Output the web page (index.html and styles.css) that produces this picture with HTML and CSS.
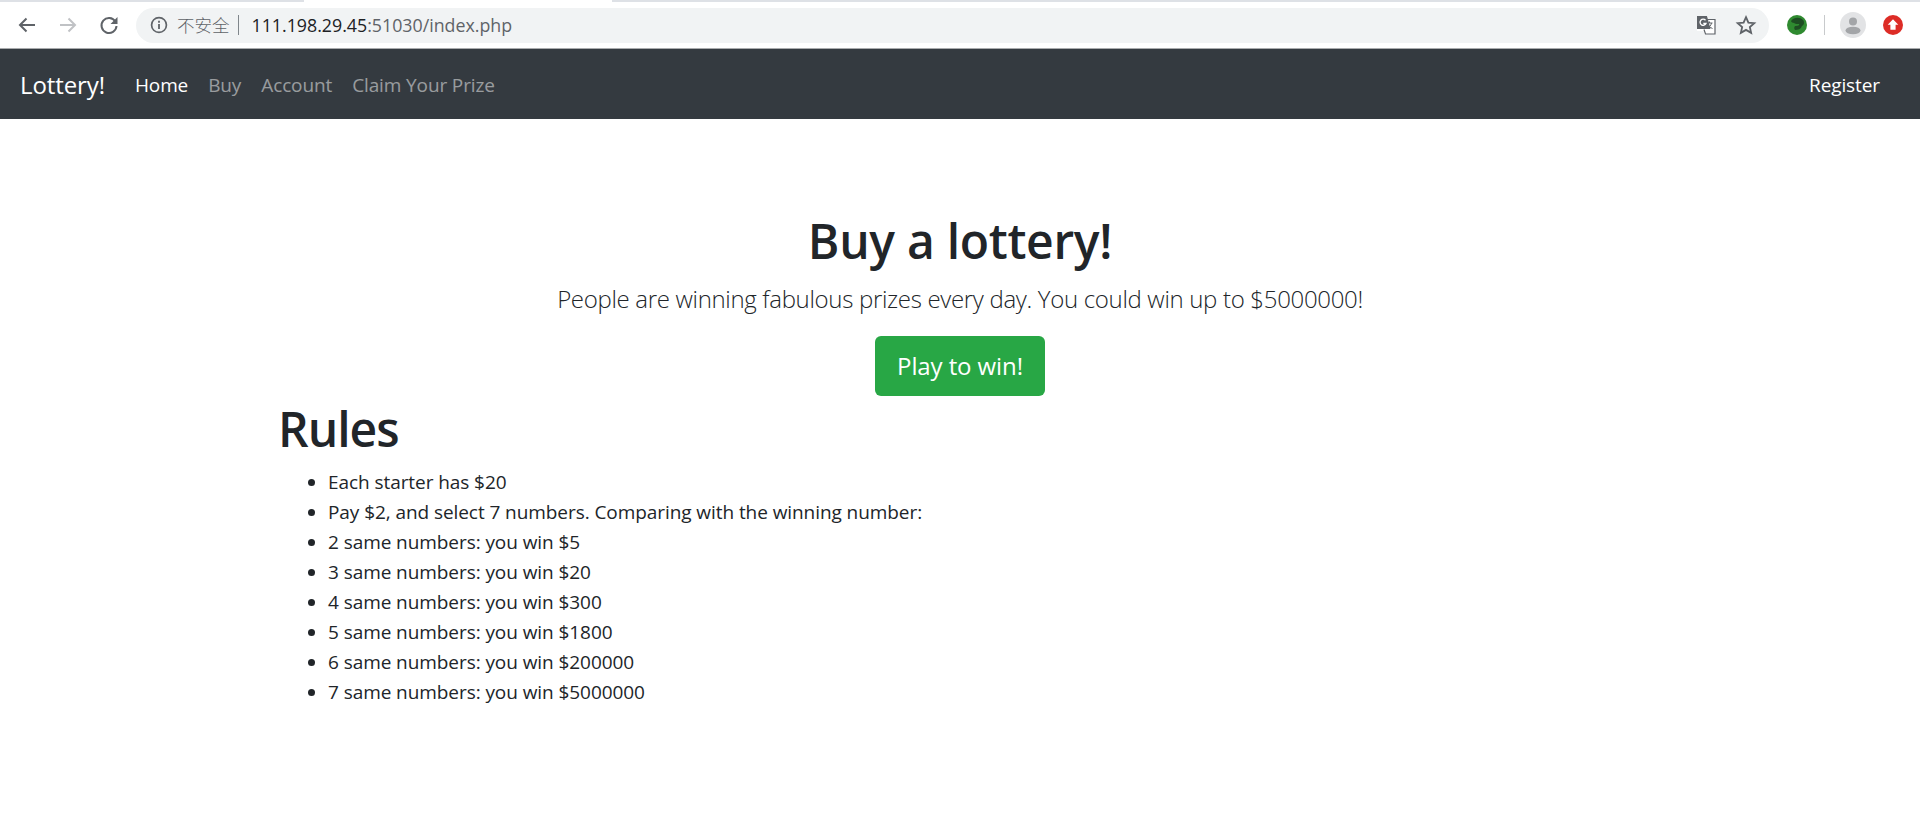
FILE: index.html
```html
<!DOCTYPE html>
<html lang="en">
<head>
    <meta charset="UTF-8">
    <title>Lottery!</title>
    <link rel="stylesheet" href="styles.css">
</head>
<body>
    <div class="tab-strip"><div class="tab-active"></div></div>
    <div class="toolbar">
        <svg class="tool-icon" viewBox="0 0 24 24"><path d="M20 12H5M11.500 5.500L5 12l6.500 6.500" fill="none" stroke="#5f6368" stroke-width="2"/></svg>
        <svg class="tool-icon" viewBox="0 0 24 24"><path d="M4 12h15M12.500 5.500L19 12l-6.500 6.500" fill="none" stroke="#c0c2c5" stroke-width="2"/></svg>
        <svg class="tool-icon" viewBox="0 0 24 24"><path d="M18.400 8.600A7.500 7.500 0 1 0 19.500 13" fill="none" stroke="#5f6368" stroke-width="2"/><path d="M20.500 4v7h-7z" fill="#5f6368"/></svg>
        <div class="address-bar">
            <svg class="info-icon" viewBox="0 0 16 16"><circle cx="8" cy="8" r="6.600" fill="none" stroke="#5f6368" stroke-width="1.500"/><path d="M7.200 7h1.600v4.500H7.200zM7.200 4.300h1.600v1.600H7.200z" fill="#5f6368"/></svg>
            <span class="not-secure">不安全</span>
            <span class="address-sep"></span>
            <span class="url"><span class="url-host">111.198.29.45</span>:51030/index.php</span>
            <svg class="translate-icon" viewBox="0 0 20 20"><path d="M1 1h10.500l1 3H19v15H8.500l-.8-3H1z" fill="#fff"/><path d="M1 1h10l3.500 13H1z" fill="#5f6368"/><path d="M9 4.500H19V19H9.500L8 14.500" fill="none" stroke="#5f6368" stroke-width="1.200"/><path d="M10.500 8h6M13.500 6.500V8M15.500 8c-.5 2.500-2 4-4.500 5.500M12 9.500c.8 1.700 2.300 3 4.500 4" fill="none" stroke="#5f6368" stroke-width="1"/><path d="M9.500 5.200A3.100 3.100 0 1 0 10 8.500H7.300" fill="none" stroke="#fff" stroke-width="1.300"/></svg>
            <svg class="star-icon" viewBox="0 0 24 24"><path d="M12 3.500l2.600 5.900 6.400.6-4.800 4.300 1.400 6.300L12 17.300l-5.600 3.300 1.400-6.300L3 10l6.400-.6z" fill="none" stroke="#5f6368" stroke-width="2"/></svg>
        </div>
        <svg class="ext-green" viewBox="0 0 20 20"><circle cx="10" cy="10" r="10" fill="#2f8a30"/><path d="M4 6c3-4 9-4 12-1 2 2 1 5-1 6-1 3-4 4-7 4-1-1-1-3 0-4 3 0 5-1 4-2-2 0-4 0-5-1-1 0-3-1-3-2z" fill="#1d4d22"/></svg>
        <span class="toolbar-sep"></span>
        <svg class="avatar" viewBox="0 0 26 26"><circle cx="13" cy="13" r="13" fill="#e2e3e5"/><circle cx="13" cy="9.500" r="4" fill="#a3a5a8"/><ellipse cx="13" cy="18.500" rx="7.500" ry="3.800" fill="#a3a5a8"/></svg>
        <svg class="ext-red" viewBox="0 0 20 20"><circle cx="10" cy="10" r="10" fill="#dd2c26"/><path d="M10 4.200l5.300 5.600H12.600V14.800H7.400V9.800H4.700z" fill="#fff"/></svg>
    </div>

    <nav class="navbar">
        <a class="brand" href="#">Lottery!</a>
        <ul class="nav-links">
            <li><a class="active" href="#">Home</a></li>
            <li><a href="#">Buy</a></li>
            <li><a href="#">Account</a></li>
            <li><a href="#">Claim Your Prize</a></li>
        </ul>
        <a class="register" href="#">Register</a>
    </nav>

    <div class="hero">
        <h1>Buy a lottery!</h1>
        <p class="lead">People are winning fabulous prizes every day. You could win up to $5000000!</p>
        <a class="btn-play" href="#">Play to win!</a>
    </div>

    <div class="container">
        <h1>Rules</h1>
        <ul class="rules">
            <li>Each starter has $20</li>
            <li>Pay $2, and select 7 numbers. Comparing with the winning number:</li>
            <li>2 same numbers: you win $5</li>
            <li>3 same numbers: you win $20</li>
            <li>4 same numbers: you win $300</li>
            <li>5 same numbers: you win $1800</li>
            <li>6 same numbers: you win $200000</li>
            <li>7 same numbers: you win $5000000</li>
        </ul>
    </div>
</body>
</html>
```

FILE: styles.css
```css
* {
    margin: 0;
    padding: 0;
    box-sizing: border-box;
}

body {
    font-family: "Open Sans", "Noto Sans CJK SC", sans-serif;
    font-size: 19px;
    line-height: 30px;
    color: #212529;
    background-color: #fff;
    overflow: hidden;
}

a {
    text-decoration: none;
}

/* Browser chrome */
.tab-strip {
    height: 2px;
    background-color: #dee1e6;
    padding-left: 304px;
}

.tab-active {
    width: 308px;
    height: 2px;
    background-color: #fff;
}

.toolbar {
    display: flex;
    align-items: center;
    height: 47px;
    padding: 0 15px 0 15px;
    border-bottom: 1px solid #a9abad;
    background-color: #fff;
}

.tool-icon {
    width: 24px;
    height: 24px;
    margin-right: 17px;
}

.address-bar {
    display: flex;
    align-items: center;
    width: 1633px;
    height: 35px;
    margin-left: -2px;
    padding: 0 12px 0 14px;
    border-radius: 18px;
    background-color: #f1f3f4;
    font-size: 17.800px;
    color: #5f6368;
}

.info-icon {
    width: 18px;
    height: 18px;
    margin-right: 9px;
}

.not-secure {
    font-family: "Noto Sans CJK SC", sans-serif;
    font-weight: 300;
    font-size: 17.500px;
}

.address-sep {
    width: 1px;
    height: 20px;
    margin: 0 13px 0 8px;
    background-color: #80868b;
}

.url-host {
    color: #202124;
}

.translate-icon {
    width: 20px;
    height: 20px;
    margin-left: auto;
    margin-right: 19px;
}

.star-icon {
    width: 22px;
    height: 22px;
}

.ext-green {
    width: 20px;
    height: 20px;
    margin-left: 18px;
}

.toolbar-sep {
    width: 1px;
    height: 20px;
    margin: 0 15px 0 17px;
    background-color: #c8cacc;
}

.avatar {
    width: 26px;
    height: 26px;
    margin-right: 17px;
}

.ext-red {
    width: 20px;
    height: 20px;
}

/* Navbar */
.navbar {
    display: flex;
    align-items: center;
    height: 70px;
    padding: 2px 40px 0 20px;
    background-color: #343a40;
}

.brand {
    font-size: 24px;
    letter-spacing: -0.100px;
    color: #fff;
    margin-right: 20px;
}

.nav-links {
    display: flex;
    list-style: none;
}

.nav-links a {
    display: block;
    padding: 0 10px;
    color: rgba(255, 255, 255, 0.5);
    letter-spacing: -0.120px;
}

.nav-links a.active {
    color: #fff;
}

.register {
    margin-left: auto;
    color: #fff;
    letter-spacing: -0.100px;
}

/* Content */
h1 {
    font-size: 48px;
    font-weight: 600;
    line-height: 62px;
    margin-bottom: 8px;
    letter-spacing: -1px;
}

.hero {
    padding-top: 91px;
    text-align: center;
}

.hero h1 {
    letter-spacing: -0.300px;
}

.lead {
    font-size: 24px;
    font-weight: 300;
    line-height: 37px;
    margin-bottom: 19px;
    letter-spacing: -0.320px;
}

.btn-play {
    display: inline-block;
    padding: 10px 22px;
    border-radius: 6px;
    background-color: #28a745;
    color: #fff;
    font-size: 24px;
    line-height: 40px;
    letter-spacing: -0.100px;
}

.container {
    max-width: 1400px;
    margin: 0 auto;
    padding: 2px 18px 0;
}

.container h1 {
    margin-bottom: 7px;
}

.rules {
    padding-left: 50px;
    letter-spacing: -0.070px;
}
```
